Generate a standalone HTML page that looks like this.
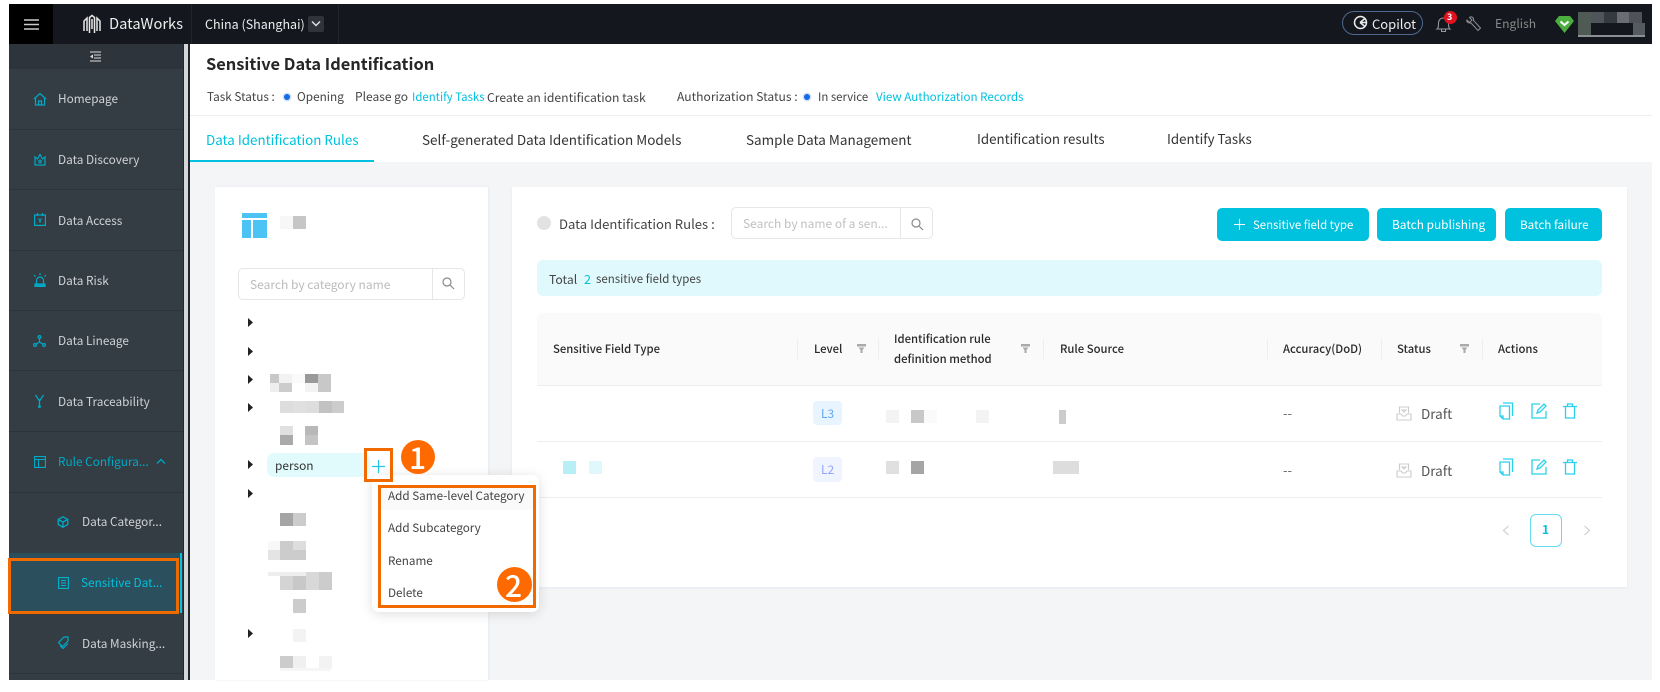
<!DOCTYPE html>
<html><head><meta charset="utf-8"><title>Sensitive Data Identification</title>
<style>
html,body{margin:0;padding:0;background:#fff}
#p{position:relative;width:1660px;height:692px;overflow:hidden;background:#fff;font-family:"Noto Sans CJK SC","Liberation Sans",sans-serif;font-size:13px;color:#333}
#p div,#p span.t,#p svg{position:absolute}
.t{white-space:nowrap;line-height:20px;transform:translateY(-10px)}
.s{color:#cfd3d6;font-size:11.800px}
.c{background:#00c1de;border-radius:5px}
.b{font-weight:500;color:#2a2a2a;font-size:11.300px}
.tab{font-size:13.500px;color:#333}
.w{color:#fff;font-size:11.700px}
.d{height:1px;background:#2c333b;left:9px;width:174px}
.vd{width:1px;height:20px;top:339px;background:#eee}
.m{font-size:11.700px;color:#444}
.st{font-size:12px;color:#444}
</style></head><body><div id="p">
<!-- frame -->
<div style="left:9px;top:4px;width:1643px;height:676px;background:#f4f5f6"></div>
<!-- top bar -->
<div style="left:9px;top:4px;width:1643px;height:40px;background:#14171d"></div>
<div style="left:9px;top:4px;width:44px;height:40px;background:#000"></div>
<div style="left:191px;top:4px;width:1px;height:40px;background:#20242b"></div>
<div style="left:338px;top:4px;width:1px;height:40px;background:#20242b"></div>
<svg style="left:24px;top:19px" width="16" height="11"><path d="M0 1h15M0 5.500h15M0 10h15" stroke="#ccc" stroke-width="1.500"/></svg>
<svg style="left:83px;top:14px" width="18" height="20" viewBox="0 0 18 20" fill="none" stroke="#e8e8e8" stroke-width="1.500"><path d="M1 17V7l3-3v13M6.500 19V3.500L9 1.500l2.500 2V19M9 5v10M14 17V4l3 3v10"/></svg>
<span class="t" style="left:109px;top:24px;font-size:14.700px;color:#eee">DataWorks</span>
<span class="t" style="left:205px;top:24px;font-size:12.500px;color:#eee">China (Shanghai)</span>
<div style="left:308px;top:16px;width:16px;height:16px;background:#30343a;border-radius:2px"></div>
<svg style="left:311px;top:20px" width="10" height="8"><path d="M1 1.500l4 4 4-4" stroke="#ddd" stroke-width="1.500" fill="none"/></svg>
<div style="left:1342px;top:11px;width:79px;height:22px;border:1px solid #4e6a90;border-radius:12px"></div>
<svg style="left:1353px;top:15px" width="15" height="15" viewBox="0 0 15 15" fill="none" stroke="#eee" stroke-width="1.500"><circle cx="7.500" cy="7.500" r="6"/><path d="M7 7.500h6.500M12 3.500L7 7.500M12 11.500L7 7.500"/></svg>
<span class="t" style="left:1372px;top:24px;font-size:13px;color:#eee">Copilot</span>
<svg style="left:1435px;top:15px" width="17" height="18" viewBox="0 0 17 18" fill="none" stroke="#999" stroke-width="1"><path d="M2 14c1.500-1 1.500-3 1.500-6 0-3 2-5 5-5s5 2 5 5c0 3 0 5 1.500 6zM6.500 14v2.500h4V14"/></svg>
<div style="left:1444px;top:11px;width:13px;height:13px;border-radius:50%;background:#e0121f"></div>
<span class="t" style="left:1447px;top:17px;font-size:9px;color:#fff;font-weight:700;line-height:20px">3</span>
<svg style="left:1465px;top:15px" width="17" height="17" viewBox="0 0 17 17" fill="none" stroke="#888" stroke-width="1.100"><path d="M2 5l2.500 2.500 2.500-2.500L4.500 2.500C6.500 1 9 2.500 8.500 5.500l7 7.500-2.500 2.500-7-7.500C3.500 8.500 1 6.500 2 5z"/></svg>
<span class="t" style="left:1495px;top:24px;font-size:12.100px;color:#888">English</span>
<svg style="left:1555px;top:16px" width="19" height="17" viewBox="0 0 19 17"><path d="M4 0h11l4 5-9.500 12L0 5z" fill="#4cae3f"/><path d="M5.500 5.500l4 3.500 4-3.500" stroke="#fff" stroke-width="2" fill="none"/></svg>
<div style="left:1578px;top:12px;width:13px;height:23px;background:#4f5a54"></div>
<div style="left:1591px;top:12px;width:13px;height:11px;background:#50555b"></div>
<div style="left:1604px;top:12px;width:13px;height:11px;background:#343a3f"></div>
<div style="left:1617px;top:12px;width:12px;height:11px;background:#6a6e72"></div>
<div style="left:1629px;top:12px;width:13px;height:11px;background:#4f5357"></div>
<div style="left:1633px;top:23px;width:12px;height:12px;background:#555a5e"></div>
<div style="left:1578px;top:35px;width:67px;height:2px;background:#8c9094"></div>
<!-- sidebar -->
<div style="left:9px;top:44px;width:174px;height:636px;background:#343c44"></div>
<div style="left:9px;top:44px;width:174px;height:25px;background:#2d343b"></div>
<div style="left:183px;top:44px;width:5px;height:636px;background:#d4d6d8"></div>
<div style="left:188px;top:44px;width:2px;height:636px;background:#20262c"></div>
<div style="left:183px;top:44px;width:1px;height:636px;background:#22282e"></div>
<svg style="left:90px;top:51px" width="12" height="11"><path d="M0 1h11M4 4h7M4 7h7M0 10h11" stroke="#ddd" stroke-width="1"/><path d="M3 3.500v4L0 5.500z" fill="#ddd"/></svg>
<div class="d" style="top:129px"></div><div class="d" style="top:189px"></div><div class="d" style="top:250px"></div><div class="d" style="top:310px"></div><div class="d" style="top:370px"></div><div class="d" style="top:431px"></div><div class="d" style="top:492px"></div><div class="d" style="top:553px"></div><div class="d" style="top:673px"></div>
<div style="left:9px;top:553px;width:171px;height:60px;background:#2b4f5c"></div>
<div style="left:180px;top:553px;width:2px;height:60px;background:#00c1de"></div>
<svg style="left:33px;top:92px" width="14" height="14" viewBox="0 0 14 14" fill="none" stroke="#00a9c5" stroke-width="1.200"><path d="M1 7l6-5.500L13 7M2.500 6v7h9V6M5.500 13V9h3v4"/></svg>
<svg style="left:33px;top:153px" width="14" height="13" viewBox="0 0 14 13" fill="none" stroke="#00a9c5" stroke-width="1.200"><path d="M2 12V4l2.500 2L7 1.500 9.500 6 12 4v8z"/><circle cx="7" cy="8.500" r="1.300"/></svg>
<svg style="left:34px;top:213px" width="12" height="13" viewBox="0 0 12 13" fill="none" stroke="#00a9c5" stroke-width="1.200"><path d="M.6 2h10.800v10.400H.6zM3.500 0v3M8.500 0v3M4.500 5.500L6 8l1.500-2.500M6 8v2"/></svg>
<svg style="left:34px;top:273px" width="12" height="14" viewBox="0 0 12 14" fill="none" stroke="#00a9c5" stroke-width="1.200"><path d="M2.500 11V7.500a3.500 3.500 0 0 1 7 0V11M0 2l1.500 1.500M12 2l-1.500 1.500M6 0v2"/><path d="M1 11h10v2.500H1z" fill="#00a9c5"/></svg>
<svg style="left:33px;top:335px" width="13" height="12" viewBox="0 0 13 12" fill="none" stroke="#00a9c5" stroke-width="1.200"><circle cx="6.500" cy="2" r="1.400"/><circle cx="2" cy="10" r="1.400"/><circle cx="11" cy="10" r="1.400"/><path d="M6.500 3.500V7M6.500 7L3 9.300M6.500 7L10 9.300"/></svg>
<svg style="left:34px;top:394px" width="11" height="14" viewBox="0 0 11 14" fill="none" stroke="#00a9c5" stroke-width="1.300"><path d="M1.500 1l4 6 4-6M5.500 7v5"/><circle cx="5.500" cy="12.500" r=".8"/></svg>
<svg style="left:34px;top:456px" width="12" height="12" viewBox="0 0 12 12" fill="none" stroke="#00a9c5" stroke-width="1.100"><path d="M.6.600h10.800v10.800H.6zM.6 3.500h10.800M4.500 3.500v7.900"/></svg>
<svg style="left:57px;top:516px" width="12" height="12" viewBox="0 0 12 12" fill="none" stroke="#00a9c5" stroke-width="1.300"><path d="M6 .8l4.800 2.700v5L6 11.200 1.200 8.500v-5zM1.200 3.500L6 6l4.800-2.500M6 6v5"/></svg>
<svg style="left:58px;top:577px" width="11" height="12" viewBox="0 0 11 12" fill="none" stroke="#00b4d0" stroke-width="1.100"><path d="M.6.600h9.800v10.800H.6zM3 3.500h5M3 6h5M3 8.500h5"/></svg>
<svg style="left:58px;top:636px" width="11" height="13" viewBox="0 0 11 13" fill="none" stroke="#00a9c5" stroke-width="1.200"><path d="M6 1h4v4L4.500 10.500l-4-4zM2 9.500l3 3 5-5"/></svg>
<span class="t s" style="left:58px;top:99px">Homepage</span>
<span class="t s" style="left:58px;top:160px">Data Discovery</span>
<span class="t s" style="left:58px;top:221px">Data Access</span>
<span class="t s" style="left:58px;top:281px">Data Risk</span>
<span class="t s" style="left:58px;top:341px">Data Lineage</span>
<span class="t s" style="left:58px;top:402px">Data Traceability</span>
<span class="t s" style="left:58px;top:462px;color:#00a9c5">Rule Configura...</span>
<svg style="left:156px;top:458px" width="10" height="7"><path d="M1 5.500l4-4 4 4" stroke="#00a9c5" stroke-width="1.300" fill="none"/></svg>
<span class="t s" style="left:82px;top:522px">Data Categor...</span>
<span class="t s" style="left:81px;top:583px;color:#00c1de">Sensitive Dat...</span>
<span class="t s" style="left:82px;top:644px">Data Masking...</span>
<div style="left:8px;top:558px;width:165px;height:50px;border:3px solid #f06a00"></div>
<!-- page header -->
<div style="left:190px;top:44px;width:1462px;height:118px;background:#fff"></div>
<div style="left:190px;top:115px;width:1462px;height:1px;background:#eee"></div>
<span class="t" style="left:206px;top:63px;font-size:16.400px;font-weight:700;color:#262626">Sensitive Data Identification</span>
<span class="t st" style="left:207px;top:97px;font-size:11.800px">Task Status :</span>
<div style="left:284px;top:94px;width:6px;height:6px;border-radius:50%;background:#1469e8;box-shadow:0 0 0 1.500px #d2e2fa"></div>
<span class="t st" style="left:297px;top:97px;font-size:11.800px">Opening</span>
<span class="t st" style="left:355px;top:97px">Please go</span>
<span class="t st" style="left:412px;top:97px;font-size:11.400px;color:#00c1de">Identify Tasks</span>
<span class="t st" style="left:487px;top:97px;font-size:12.200px">Create an identification task</span>
<span class="t st" style="left:677px;top:97px;font-size:12.100px">Authorization Status :</span>
<div style="left:804px;top:94px;width:6px;height:6px;border-radius:50%;background:#1469e8;box-shadow:0 0 0 1.500px #d2e2fa"></div>
<span class="t st" style="left:818px;top:97px;font-size:11.400px">In service</span>
<span class="t st" style="left:876px;top:97px;font-size:11.600px;color:#00c1de">View Authorization Records</span>
<span class="t tab" style="left:206px;top:139px;font-size:13.400px;color:#00c1de">Data Identification Rules</span>
<span class="t tab" style="left:422px;top:139px">Self-generated Data Identification Models</span>
<span class="t tab" style="left:746px;top:139px">Sample Data Management</span>
<span class="t tab" style="left:977px;top:139px;font-size:13.300px">Identification results</span>
<span class="t tab" style="left:1167px;top:139px;font-size:13.300px">Identify Tasks</span>
<div style="left:190px;top:160px;width:184px;height:2px;background:#00c1de"></div>
<!-- left card -->
<div style="left:215px;top:187px;width:273px;height:493px;background:#fff;box-shadow:1px 0 2px #e6eaf2"></div>
<svg style="left:242px;top:213px" width="25" height="25"><path d="M0 0h25v5H0zM0 7h9v18H0zM11 7h14v18H11z" fill="#4bc3f5"/></svg>
<div style="left:280px;top:216px;width:13px;height:13px;background:#f7f7f7"></div>
<div style="left:293px;top:216px;width:13px;height:13px;background:#c6c6c6"></div>
<div style="left:238px;top:268px;width:225px;height:30px;border:1px solid #e4e6e8;border-radius:5px"></div>
<div style="left:432px;top:268px;width:1px;height:32px;background:#e4e6e8"></div>
<span class="t" style="left:250px;top:285px;font-size:12px;color:#bbb">Search by category name</span>
<svg style="left:442px;top:277px" width="13" height="13" fill="none" stroke="#888" stroke-width="1.200"><circle cx="5" cy="5" r="4"/><path d="M8 8l4 4"/></svg>
<svg style="left:248px;top:318px" width="5" height="330"><path d="M0 0l5 4.500L0 9zM0 29l5 4.500L0 38zM0 57l5 4.500L0 66zM0 85l5 4.500L0 94zM0 142l5 4.500L0 151zM0 171l5 4.500L0 180zM0 311l5 4.500L0 320z" fill="#222"/></svg>
<div style="left:270px;top:374px;width:9px;height:9px;background:#c8c8c8"></div><div style="left:279px;top:374px;width:13px;height:9px;background:#f2f2f2"></div><div style="left:292px;top:374px;width:13px;height:9px;background:#fafafa"></div><div style="left:305px;top:374px;width:13px;height:9px;background:#999"></div><div style="left:318px;top:374px;width:13px;height:18px;background:#c8c8c8"></div><div style="left:270px;top:383px;width:9px;height:9px;background:#eee"></div><div style="left:279px;top:383px;width:13px;height:9px;background:#ccc"></div><div style="left:305px;top:383px;width:13px;height:9px;background:#f3f3f3"></div>
<div style="left:280px;top:401px;width:13px;height:12px;background:#ddd"></div><div style="left:293px;top:401px;width:13px;height:12px;background:#e0e0e0"></div><div style="left:306px;top:401px;width:13px;height:12px;background:#ddd"></div><div style="left:319px;top:401px;width:13px;height:12px;background:#c2c2c2"></div><div style="left:332px;top:401px;width:12px;height:12px;background:#ccc"></div>
<div style="left:280px;top:426px;width:13px;height:9px;background:#e0e0e0"></div><div style="left:280px;top:435px;width:13px;height:10px;background:#aaa"></div><div style="left:305px;top:426px;width:13px;height:9px;background:#b8b8b8"></div><div style="left:305px;top:435px;width:13px;height:10px;background:#c4c4c4"></div>
<div style="left:267px;top:453px;width:103px;height:24px;background:#e1fbfd;border-radius:7px"></div>
<span class="t" style="left:275px;top:466px;font-size:11.900px;color:#333">person</span>
<div style="left:280px;top:513px;width:13px;height:13px;background:#a5a5a5"></div><div style="left:293px;top:513px;width:13px;height:13px;background:#ccc"></div>
<div style="left:268px;top:541px;width:12px;height:9px;background:#f8f8f8"></div><div style="left:268px;top:550px;width:12px;height:10px;background:#e4e4e4"></div><div style="left:280px;top:541px;width:13px;height:19px;background:#ccc"></div><div style="left:293px;top:541px;width:13px;height:9px;background:#ddd"></div><div style="left:293px;top:550px;width:13px;height:10px;background:#ccc"></div>
<div style="left:268px;top:572px;width:64px;height:4px;background:#eee"></div><div style="left:280px;top:576px;width:13px;height:14px;background:#d4d4d4"></div><div style="left:293px;top:576px;width:13px;height:14px;background:#c8c8c8"></div><div style="left:306px;top:572px;width:13px;height:18px;background:#d8d8d8"></div><div style="left:319px;top:572px;width:13px;height:18px;background:#ccc"></div>
<div style="left:293px;top:599px;width:13px;height:14px;background:#ccc"></div>
<div style="left:293px;top:629px;width:13px;height:13px;background:#f3f3f3"></div>
<div style="left:280px;top:656px;width:13px;height:12px;background:#ccc"></div><div style="left:293px;top:656px;width:13px;height:12px;background:#f0f0f0"></div><div style="left:319px;top:656px;width:13px;height:12px;background:#f3f3f3"></div><div style="left:280px;top:668px;width:51px;height:3px;background:#f6f6f6"></div>
<!-- right card -->
<div style="left:512px;top:187px;width:1115px;height:400px;background:#fff;box-shadow:0 1px 3px #e6eaf2"></div>
<div style="left:537px;top:216px;width:14px;height:14px;border-radius:50%;background:#e2e2e2"></div>
<span class="t" style="left:559px;top:224px;font-size:13.100px;color:#444">Data Identification Rules :</span>
<div style="left:731px;top:207px;width:200px;height:30px;border:1px solid #e4e6e8;border-radius:5px"></div>
<div style="left:900px;top:207px;width:1px;height:32px;background:#e4e6e8"></div>
<span class="t" style="left:743px;top:224px;font-size:12px;color:#c0c0c0">Search by name of a sen...</span>
<svg style="left:911px;top:218px" width="13" height="13" fill="none" stroke="#888" stroke-width="1.200"><circle cx="5" cy="5" r="4"/><path d="M8 8l4 4"/></svg>
<div class="c" style="left:1217px;top:208px;width:152px;height:33px"></div>
<div class="c" style="left:1377px;top:208px;width:119px;height:33px"></div>
<div class="c" style="left:1505px;top:208px;width:97px;height:33px"></div>
<svg style="left:1234px;top:219px" width="11" height="11"><path d="M5.500 0v11M0 5.500h11" stroke="#fff" stroke-width="1.100"/></svg>
<span class="t w" style="left:1253px;top:225px;font-size:11.400px">Sensitive field type</span>
<span class="t w" style="left:1392px;top:225px;font-size:11.900px">Batch publishing</span>
<span class="t w" style="left:1520px;top:225px">Batch failure</span>
<div style="left:537px;top:260px;width:1065px;height:36px;background:#e0f9fd;border-radius:6px"></div>
<span class="t" style="left:549px;top:279px;font-size:12.200px;color:#444">Total</span>
<span class="t" style="left:584px;top:279px;font-size:12.500px;color:#00c1de">2</span>
<span class="t" style="left:596px;top:279px;font-size:11.500px;color:#444">sensitive field types</span>
<div style="left:537px;top:313px;width:1065px;height:72px;background:#fafafa;border-radius:6px 6px 0 0"></div>
<div style="left:537px;top:385px;width:1065px;height:1px;background:#eee"></div>
<div style="left:537px;top:441px;width:1065px;height:1px;background:#eee"></div>
<div style="left:537px;top:497px;width:1065px;height:1px;background:#eee"></div>
<div class="vd" style="left:797px"></div><div class="vd" style="left:878px"></div><div class="vd" style="left:1043px"></div><div class="vd" style="left:1267px"></div><div class="vd" style="left:1381px"></div><div class="vd" style="left:1482px"></div>
<span class="t b" style="left:553px;top:349px">Sensitive Field Type</span>
<span class="t b" style="left:814px;top:349px">Level</span>
<span class="t b" style="left:894px;top:339px">Identification rule</span>
<span class="t b" style="left:894px;top:359px">definition method</span>
<span class="t b" style="left:1060px;top:349px">Rule Source</span>
<span class="t b" style="left:1283px;top:349px">Accuracy(DoD)</span>
<span class="t b" style="left:1397px;top:349px">Status</span>
<span class="t b" style="left:1498px;top:349px">Actions</span>
<svg style="left:857px;top:344px" width="9" height="9"><path d="M0 0h9v2.500H0zM1.500 3.500h6L5.500 6v3h-2V6z" fill="#aaa"/></svg>
<svg style="left:1021px;top:344px" width="9" height="9"><path d="M0 0h9v2.500H0zM1.500 3.500h6L5.500 6v3h-2V6z" fill="#aaa"/></svg>
<svg style="left:1460px;top:344px" width="9" height="9"><path d="M0 0h9v2.500H0zM1.500 3.500h6L5.500 6v3h-2V6z" fill="#aaa"/></svg>
<div style="left:813px;top:401px;width:29px;height:24px;background:#e8f4ff;border-radius:4px"></div>
<span class="t" style="left:821px;top:414px;font-size:12px;color:#5fa8f5">L3</span>
<div style="left:813px;top:457px;width:29px;height:25px;background:#f0f4ff;border-radius:4px"></div>
<span class="t" style="left:821px;top:470px;font-size:12px;color:#93a5f5">L2</span>
<div style="left:886px;top:410px;width:13px;height:13px;background:#f3f3f3"></div><div style="left:911px;top:410px;width:13px;height:13px;background:#c8c8c8"></div><div style="left:924px;top:410px;width:13px;height:13px;background:#fafafa"></div><div style="left:976px;top:410px;width:13px;height:13px;background:#f3f3f3"></div>
<div style="left:886px;top:461px;width:13px;height:13px;background:#e0e0e0"></div><div style="left:911px;top:461px;width:13px;height:13px;background:#a5a5a5"></div>
<div style="left:563px;top:461px;width:13px;height:13px;background:#b8eef5"></div><div style="left:589px;top:461px;width:13px;height:13px;background:#e0f8fc"></div>
<div style="left:1059px;top:410px;width:7px;height:14px;background:#ccc"></div><div style="left:1053px;top:461px;width:26px;height:13px;background:#ddd"></div>
<span class="t" style="left:1283px;top:413px;color:#666">--</span><span class="t" style="left:1283px;top:470px;color:#666">--</span>
<svg style="left:1396px;top:406px" width="16" height="15" viewBox="0 0 16 15" fill="none" stroke="#ccc" stroke-width="1.100"><path d="M3.500 7V1h9v6M1 8l4 0 1.500 2h3L11 8h4v6H1zM6 4h4l-2 2z"/></svg>
<svg style="left:1396px;top:463px" width="16" height="15" viewBox="0 0 16 15" fill="none" stroke="#ccc" stroke-width="1.100"><path d="M3.500 7V1h9v6M1 8l4 0 1.500 2h3L11 8h4v6H1zM6 4h4l-2 2z"/></svg>
<span class="t" style="left:1421px;top:413px;font-size:13.500px;color:#555">Draft</span>
<span class="t" style="left:1421px;top:470px;font-size:13.500px;color:#555">Draft</span>
<svg style="left:1499px;top:402px" width="15" height="18" viewBox="0 0 15 18" fill="none" stroke="#2bd0ea" stroke-width="1.300"><path d="M4 1h9.500v13M1 4h9.500v13H4l-3-3zM1 14h3v3"/></svg>
<svg style="left:1531px;top:403px" width="16" height="16" viewBox="0 0 16 16" fill="none" stroke="#2bd0ea" stroke-width="1.300"><path d="M9 1H1v14h14V8M6 10l1-3 6-6 2 2-6 6z"/></svg>
<svg style="left:1563px;top:403px" width="15" height="16" viewBox="0 0 15 16" fill="none" stroke="#2bd0ea" stroke-width="1.300"><path d="M0 3.500h14M4.500 3V1h5v2M2.500 3.500V15h9V3.500"/></svg>
<svg style="left:1499px;top:458px" width="15" height="18" viewBox="0 0 15 18" fill="none" stroke="#2bd0ea" stroke-width="1.300"><path d="M4 1h9.500v13M1 4h9.500v13H4l-3-3zM1 14h3v3"/></svg>
<svg style="left:1531px;top:459px" width="16" height="16" viewBox="0 0 16 16" fill="none" stroke="#2bd0ea" stroke-width="1.300"><path d="M9 1H1v14h14V8M6 10l1-3 6-6 2 2-6 6z"/></svg>
<svg style="left:1563px;top:459px" width="15" height="16" viewBox="0 0 15 16" fill="none" stroke="#2bd0ea" stroke-width="1.300"><path d="M0 3.500h14M4.500 3V1h5v2M2.500 3.500V15h9V3.500"/></svg>
<svg style="left:1502px;top:525px" width="8" height="11"><path d="M6.500 1L1.500 5.500l5 4.500" stroke="#ccc" stroke-width="1.100" fill="none"/></svg>
<svg style="left:1583px;top:525px" width="8" height="11"><path d="M1.500 1l5 4.500-5 4.500" stroke="#ccc" stroke-width="1.100" fill="none"/></svg>
<div style="left:1530px;top:514px;width:30px;height:31px;border:1px solid #66dcec;border-radius:6px"></div>
<span class="t" style="left:1542px;top:530px;font-size:12px;font-weight:700;color:#00c1de">1</span>
<!-- popover -->
<div style="left:372px;top:475px;width:167px;height:137px;background:#fff;border-radius:7px;box-shadow:0 2px 12px rgba(0,0,0,.13)"></div>
<div style="left:381px;top:487px;width:152px;height:23px;background:#fafafa"></div>
<span class="t m" style="left:388px;top:496px">Add Same-level Category</span>
<span class="t m" style="left:388px;top:528px">Add Subcategory</span>
<span class="t m" style="left:388px;top:561px">Rename</span>
<span class="t m" style="left:388px;top:593px">Delete</span>
<div style="left:378px;top:485px;width:152px;height:117px;border:3px solid #f06a00"></div>
<div style="left:364px;top:448px;width:23px;height:28px;border:3px solid #f06a00"></div>
<svg style="left:371px;top:459px" width="15" height="15"><path d="M7.500 1v13M1 7.500h13" stroke="#22c8e2" stroke-width="1.200"/></svg>
<div style="left:401px;top:440px;width:34px;height:34px;border-radius:50%;background:#ff6a00"></div>
<span class="t" style="left:409px;top:456px;font-size:30px;font-weight:500;color:#fff">1</span>
<div style="left:497px;top:567px;width:35px;height:35px;border-radius:50%;background:#ff6a00"></div>
<span class="t" style="left:505px;top:584px;font-size:30px;font-weight:500;color:#fff">2</span>
</div></body></html>
